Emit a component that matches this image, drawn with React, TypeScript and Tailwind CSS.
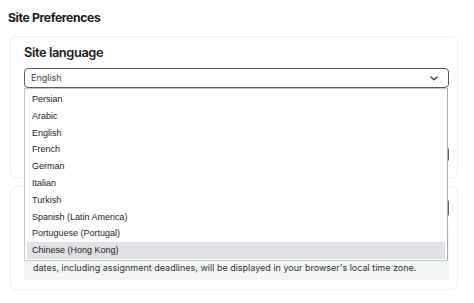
import React from "react";

const languages = [
  "Persian",
  "Arabic",
  "English",
  "French",
  "German",
  "Italian",
  "Turkish",
  "Spanish (Latin America)",
  "Portuguese (Portugal)",
  "Chinese (Hong Kong)",
];

export default function App() {
  return (
    <div className="relative w-[474px] h-[303px] overflow-hidden bg-white font-['Inter',sans-serif] text-[#1b1b1b]">
      <div className="pl-[8px] pt-[10px]">
        <h1 className="text-[12.2px] leading-[15px] font-bold tracking-[-0.03em]">Site Preferences</h1>
      </div>

      <div className="ml-[10px] mt-[11px] w-[448px] h-[142px] rounded-[6px] border border-[#eeeeee] pl-[13px] pr-[9px] pt-[7px] shadow-[0_0_2px_rgba(0,0,0,0.04)]">
        <h2 className="text-[12.8px] leading-[18px] font-semibold tracking-[-0.03em]">Site language</h2>
        <div className="mt-[6px] h-[20px] w-[425px] rounded-[4px] border border-[#5a5a5a] flex items-center justify-between pl-[6px] pr-[10px]">
          <span className="text-[9px] text-[#444]">English</span>
          <svg width="8" height="5" viewBox="0 0 8 5" fill="none">
            <path d="M1 1l3 2.8L7 1" stroke="#333" strokeWidth="1.3" strokeLinecap="round" strokeLinejoin="round" />
          </svg>
        </div>
        <div className="mt-[58px] h-[17px] w-[425px] rounded-[4px] border border-[#5a5a5a]"></div>
      </div>

      <div className="ml-[10px] mt-[8px] w-[448px] h-[104px] rounded-[6px] border border-[#eeeeee] pl-[13px] pr-[9px] pt-[11px]">
        <div className="h-[20px] w-[425px] rounded-[4px] border border-[#5a5a5a]"></div>
        <div className="mt-[10px] w-[425px] h-[52px] bg-[#f1f6f5] flex items-end pl-[9px] pb-[6px]">
          <p className="text-[9px] leading-[12px] text-[#333]">
            dates, including assignment deadlines, will be displayed in your browser's local time zone.
          </p>
        </div>
      </div>

      <div className="absolute left-[24px] top-[88px] w-[424px] h-[173px] bg-white border border-[#c4c4c4] border-r-[#a8a8a8] font-['Liberation_Sans',Arial,sans-serif] text-[9px] text-[#222] pt-[2px] px-[1px]">
        {languages.map((l, i) => (
          <div
            key={l}
            className={
              i === languages.length - 1
                ? "h-[16.8px] leading-[16.8px] pl-[5px] bg-[#e1e0e5] mx-[1px]"
                : "h-[16.8px] leading-[16.8px] pl-[6px]"
            }
          >
            {l}
          </div>
        ))}
      </div>
    </div>
  );
}
